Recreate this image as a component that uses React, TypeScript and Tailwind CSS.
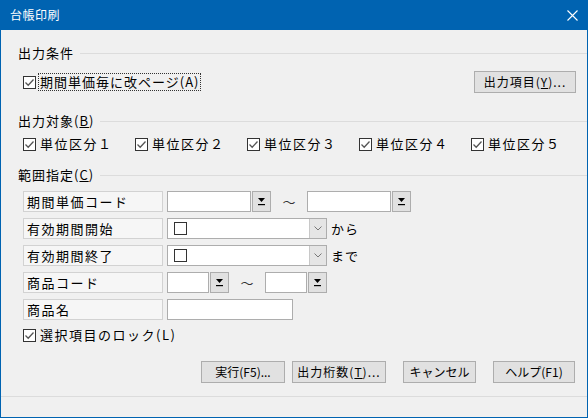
import React from 'react';

const font = { fontFamily: '"Noto Sans CJK JP", "Liberation Sans", sans-serif' };

function Check({ checked = true }: { checked?: boolean }) {
  return (
    <span className="w-[13px] h-[13px] border border-[#333333] bg-white flex items-center justify-center shrink-0">
      {checked && (
        <svg width="11" height="11" viewBox="0 0 11 11">
          <path d="M1.5 5.5 L4.2 8.2 L9.5 2.5" fill="none" stroke="#555" strokeWidth="1.3" />
        </svg>
      )}
    </span>
  );
}

function SectionHeader({ children }: { children: React.ReactNode }) {
  return (
    <div className="flex items-center h-4 pl-[17px]">
      <span className="text-[13px] leading-4 tracking-[1px] text-black whitespace-nowrap">{children}</span>
      <div className="flex-1 h-px bg-[#dcdcdc] ml-[6px]" />
    </div>
  );
}

function DropBtn() {
  return (
    <div className="w-[19px] h-[21px] ml-px bg-[#e1e1e1] border border-[#adadad] flex items-center justify-center">
      <svg width="9" height="9" viewBox="0 0 9 9">
        <path d="M1 1 H8 L4.5 5 Z" fill="#000" />
        <rect x="1" y="7" width="7" height="1.2" fill="#000" />
      </svg>
    </div>
  );
}

function Input({ w }: { w: string }) {
  return <div className={`${w} h-[21px] bg-white border border-[#adadad]`} />;
}

function Combo({ suffix }: { suffix: string }) {
  return (
    <div className="flex items-center">
      <div className="w-[160px] h-[21px] bg-white border border-[#adadad] flex items-center">
        <div className="flex-1 pl-[6px] flex items-center">
          <Check checked={false} />
        </div>
        <div className="w-[17px] h-full bg-[#e5e5e5] border-l border-[#c8c8c8] flex items-center justify-center">
          <svg width="8" height="5" viewBox="0 0 8 5">
            <path d="M0.5 0.5 L4 4 L7.5 0.5" fill="none" stroke="#777" strokeWidth="1" />
          </svg>
        </div>
      </div>
      <span className="ml-[4px] text-[13px] tracking-[1px] text-black">{suffix}</span>
    </div>
  );
}

function Label({ children }: { children: React.ReactNode }) {
  return (
    <div className="w-[140px] h-[21px] bg-[#f6f6f6] border border-[#d2d2d2] flex items-center pl-[3px] text-[13px] tracking-[1.5px] text-black whitespace-nowrap">
      {children}
    </div>
  );
}

function Tilde({ w }: { w: string }) {
  return <span className={`${w} text-center text-[13px] text-[#333]`}>～</span>;
}

function Button({ w, children }: { w: string; children: React.ReactNode }) {
  return (
    <div className={`${w} h-[22px] bg-[#e1e1e1] border border-[#adadad] flex items-center justify-center text-[12px] text-black whitespace-nowrap`}>
      {children}
    </div>
  );
}

export default function App() {
  const units = ['単位区分１', '単位区分２', '単位区分３', '単位区分４', '単位区分５'];

  return (
    <div style={font} className="w-[588px] h-[418px] flex flex-col bg-[#0063b1] overflow-hidden">
      {/* Title bar */}
      <div className="h-[30px] flex items-center justify-between pl-[10px] pr-[10px] shrink-0">
        <span className="text-[12px] text-white tracking-[0.5px]">台帳印刷</span>
        <svg width="11" height="11" viewBox="0 0 11 11">
          <path d="M0.5 0.5 L10.5 10.5 M10.5 0.5 L0.5 10.5" stroke="#fff" strokeWidth="1.1" />
        </svg>
      </div>

      {/* Body */}
      <div className="flex-1 mx-px mb-px bg-[#f0f0f0] flex flex-col">
        <div className="mt-[15px]">
          <SectionHeader>出力条件</SectionHeader>
        </div>

        <div className="mt-[10px] h-[22px] flex items-center pl-[22px] pr-[11px]">
          <Check />
          <span className="ml-[3px] text-[13px] leading-4 tracking-[1px] text-black outline outline-1 outline-dotted outline-[#333] px-px">
            期間単価毎に改ページ(A)
          </span>
          <div className="flex-1" />
          <Button w="w-[102px]">
            <span className="tracking-[1px]">出力項目(<u>Y</u>)...</span>
          </Button>
        </div>

        <div className="mt-[20px]">
          <SectionHeader>
            出力対象(<u>B</u>)
          </SectionHeader>
        </div>

        <div className="mt-[7px] h-4 flex items-center pl-[22px]">
          {units.map((u) => (
            <div key={u} className="w-[112px] flex items-center">
              <Check />
              <span className="ml-[4px] text-[13px] leading-4 tracking-[1.5px] text-black whitespace-nowrap">{u}</span>
            </div>
          ))}
        </div>

        <div className="mt-[15px]">
          <SectionHeader>
            範囲指定(<u>C</u>)
          </SectionHeader>
        </div>

        <div className="mt-[8px] pl-[22px] flex flex-col gap-[6px]">
          <div className="flex items-center gap-[4px]">
            <Label>期間単価コード</Label>
            <div className="flex items-center">
              <Input w="w-[84px]" />
              <DropBtn />
              <Tilde w="w-[36px]" />
              <Input w="w-[84px]" />
              <DropBtn />
            </div>
          </div>
          <div className="flex items-center gap-[4px]">
            <Label>有効期間開始</Label>
            <Combo suffix="から" />
          </div>
          <div className="flex items-center gap-[4px]">
            <Label>有効期間終了</Label>
            <Combo suffix="まで" />
          </div>
          <div className="flex items-center gap-[4px]">
            <Label>商品コード</Label>
            <div className="flex items-center">
              <Input w="w-[42px]" />
              <DropBtn />
              <Tilde w="w-[36px]" />
              <Input w="w-[42px]" />
              <DropBtn />
            </div>
          </div>
          <div className="flex items-center gap-[4px]">
            <Label>商品名</Label>
            <Input w="w-[126px]" />
          </div>
        </div>

        <div className="mt-[7px] h-4 flex items-center pl-[22px]">
          <Check />
          <span className="ml-[4px] text-[13px] leading-4 tracking-[1.5px] text-black">選択項目のロック(L)</span>
        </div>

        <div className="mt-[18px] flex items-center pl-[200px]">
          <Button w="w-[84px]">実行(F5)...</Button>
          <div className="ml-[7px]">
            <Button w="w-[94px]">
              <span className="tracking-[1px]">出力桁数(<u>T</u>)...</span>
            </Button>
          </div>
          <div className="ml-[17px]">
            <Button w="w-[73px]">キャンセル</Button>
          </div>
          <div className="ml-[17px]">
            <Button w="w-[82px]">ヘルプ(F1)</Button>
          </div>
        </div>

        <div className="mt-[13px] h-px bg-[#dcdcdc]" />
      </div>
    </div>
  );
}
